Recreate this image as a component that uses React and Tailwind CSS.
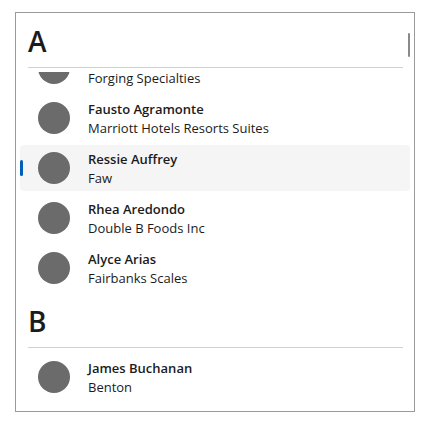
import React, { useEffect, useRef } from 'react';

const groups = [
  {
    letter: 'A',
    people: [
      { name: 'Roselle Abernathy', company: 'Forging Specialties' },
      { name: 'Fausto Agramonte', company: 'Marriott Hotels Resorts Suites' },
      { name: 'Ressie Auffrey', company: 'Faw', selected: true },
      { name: 'Rhea Aredondo', company: 'Double B Foods Inc' },
      { name: 'Alyce Arias', company: 'Fairbanks Scales' },
    ],
  },
  {
    letter: 'B',
    people: [{ name: 'James Buchanan', company: 'Benton' }],
  },
];

function ContactRow({ person }) {
  return (
    <div className="h-[50px] px-[4px] py-[2px]">
      <div
        className={
          'relative flex h-full items-center gap-[18px] rounded-[4px] pl-[18px] ' +
          (person.selected ? 'bg-[#f5f5f5]' : '')
        }
      >
        {person.selected && (
          <span className="absolute left-0 top-[15px] h-[16px] w-[3px] rounded-full bg-[#005fb8]" />
        )}
        <div className="h-[32px] w-[32px] shrink-0 rounded-full bg-[#6b6b6b]" />
        <div className="flex flex-col pt-[2px] text-[13px] leading-[19px] text-[#1b1b1b]">
          <span className="font-semibold">{person.name}</span>
          <span>{person.company}</span>
        </div>
      </div>
    </div>
  );
}

export default function App() {
  const listRef = useRef(null);

  useEffect(() => {
    if (listRef.current) listRef.current.scrollTop = 29;
  }, []);

  return (
    <div
      className="bg-white pl-[15px] pt-[12px]"
      style={{ fontFamily: '"Segoe UI", "Open Sans", sans-serif' }}
    >
      <div className="relative h-[400px] w-[400px] border border-[#9a9a9a]">
        <div ref={listRef} className="h-full overflow-hidden">
          {groups.map((group) => (
            <div key={group.letter}>
              <div className="sticky top-0 z-10 h-[59px] bg-white pl-[12px] pr-[11px]">
                <div className="flex h-[54px] items-center pt-[2px] text-[28px] font-semibold leading-none text-[#1b1b1b]">
                  {group.letter}
                </div>
                <div className="h-px bg-[#d1d1d1]" />
              </div>
              {group.people.map((p) => (
                <ContactRow key={p.name} person={p} />
              ))}
            </div>
          ))}
          <div className="h-[60px]" />
        </div>
        {/* scrollbar thumb */}
        <div className="absolute right-[4px] top-[20px] z-20 h-[24px] w-[2px] rounded-full bg-[#8a8a8a]" />
      </div>
    </div>
  );
}
